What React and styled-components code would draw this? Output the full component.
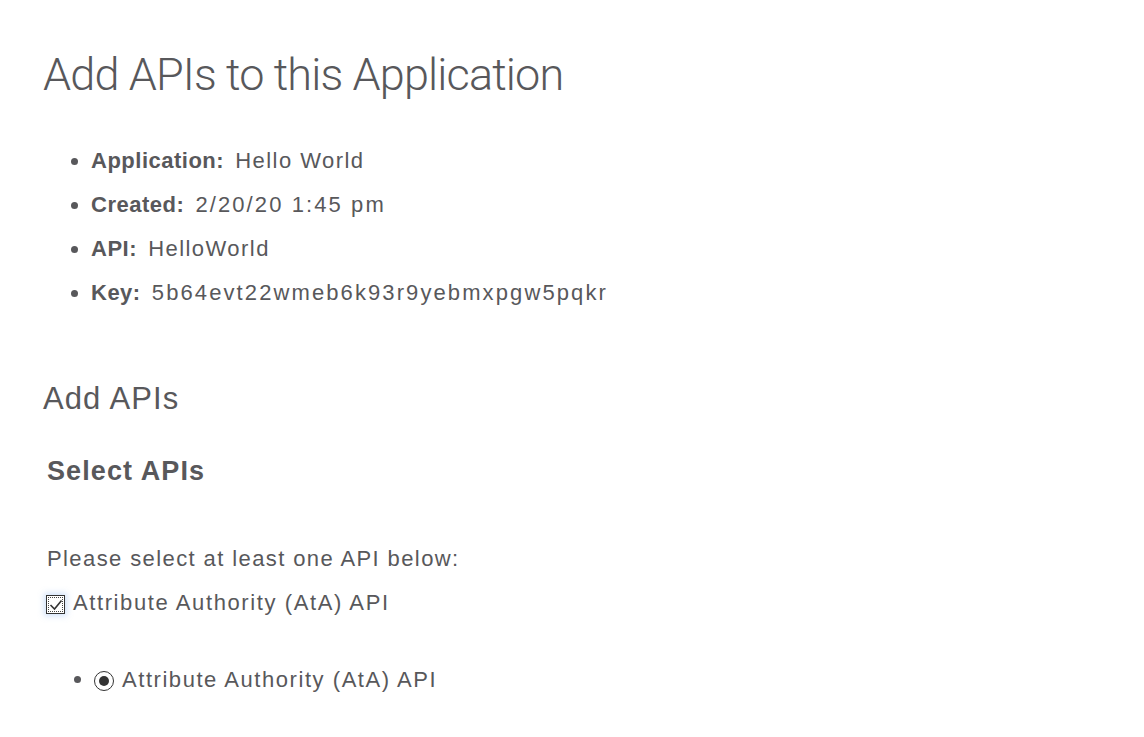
import styled, { createGlobalStyle } from 'styled-components';

const GlobalStyle = createGlobalStyle`
  body {
    margin: 0;
    background: #ffffff;
    color: #58585b;
    font-family: "Liberation Sans", Arial, sans-serif;
  }
`;

const Page = styled.div`
  padding: 48px 0 40px 43px;
`;

const Title = styled.h1`
  margin: 0;
  font-family: Roboto, "Liberation Sans", sans-serif;
  font-weight: 300;
  font-size: 45px;
  line-height: 54px;
  letter-spacing: -0.85px;
  color: #58585b;
`;

const InfoList = styled.ul`
  margin: 37px 0 0;
  padding-left: 48px;
  list-style: disc;
  font-size: 22px;
  line-height: 44px;

  b {
    font-weight: 700;
    letter-spacing: 0.5px;
  }
`;

const Value = styled.span`
  margin-left: 5px;
  letter-spacing: ${(p) => (p.$numeric ? '2.1px' : '1.45px')};
`;

const SectionTitle = styled.h2`
  margin: 66px 0 0;
  font-size: 31px;
  font-weight: 400;
  line-height: 36px;
  letter-spacing: 1.1px;
`;

const SubTitle = styled.h3`
  margin: 38px 0 0 4px;
  font-size: 27px;
  font-weight: 700;
  line-height: 32px;
  letter-spacing: 1.1px;
`;

const Prompt = styled.p`
  margin: 58px 0 0 4px;
  font-size: 22px;
  line-height: 28px;
  letter-spacing: 1.4px;
`;

const CheckRow = styled.label`
  display: flex;
  align-items: center;
  gap: 8px;
  margin: 16px 0 0 3px;
  font-size: 22px;
  line-height: 28px;
  letter-spacing: 1.6px;
`;

const CheckBox = styled.span`
  position: relative;
  display: inline-flex;
  align-items: center;
  justify-content: center;
  width: 19px;
  height: 19px;
  box-sizing: border-box;
  border: 1px solid #333333;
  background: #ffffff;
  box-shadow: 0 0 6px 2px rgba(120, 170, 240, 0.35);
  margin-top: 3px;

  &::after {
    content: "";
    position: absolute;
    inset: 1px;
    border: 1px dotted #444444;
  }
`;

const RadioList = styled.ul`
  margin: 48px 0 0;
  padding-left: 51px;
  list-style: disc;
  font-size: 22px;
  line-height: 28px;
  letter-spacing: 1.55px;
`;

const RadioItem = styled.li`
  label {
    display: inline-flex;
    align-items: center;
    gap: 8px;
  }
`;

const Radio = styled.span`
  display: inline-flex;
  align-items: center;
  justify-content: center;
  width: 20px;
  height: 20px;
  box-sizing: border-box;
  border: 1.5px solid #333333;
  border-radius: 50%;
  margin-top: 2px;

  &::after {
    content: "";
    width: 10px;
    height: 10px;
    border-radius: 50%;
    background: #333333;
  }
`;

export default function App() {
  return (
    <Page>
      <GlobalStyle />
      <Title>Add APIs to this Application</Title>
      <InfoList>
        <li><b>Application:</b> <Value>Hello World</Value></li>
        <li><b>Created:</b> <Value $numeric>2/20/20 1:45 pm</Value></li>
        <li><b>API:</b> <Value>HelloWorld</Value></li>
        <li><b>Key:</b> <Value $numeric>5b64evt22wmeb6k93r9yebmxpgw5pqkr</Value></li>
      </InfoList>
      <SectionTitle>Add APIs</SectionTitle>
      <SubTitle>Select APIs</SubTitle>
      <Prompt>Please select at least one API below:</Prompt>
      <CheckRow>
        <CheckBox>
          <svg width="14" height="12" viewBox="0 0 14 12">
            <path d="M1.5 6 L5.5 10 L12.5 1.5" fill="none" stroke="#333333" strokeWidth="1.6" />
          </svg>
        </CheckBox>
        Attribute Authority (AtA) API
      </CheckRow>
      <RadioList>
        <RadioItem>
          <label>
            <Radio />
            Attribute Authority (AtA) API
          </label>
        </RadioItem>
      </RadioList>
    </Page>
  );
}
